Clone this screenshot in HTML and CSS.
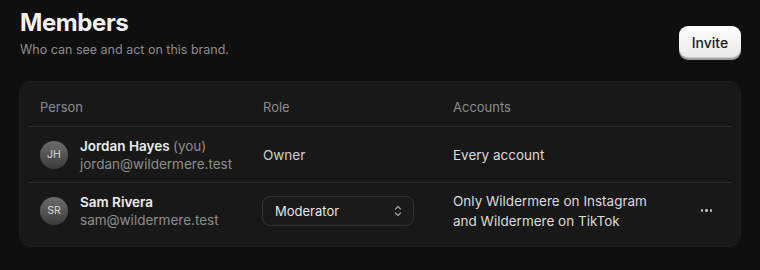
FILE: index.html
```html
<!DOCTYPE html>
<html>
<head>
<meta charset="utf-8">
<link rel="stylesheet" href="styles.css">
</head>
<body>
<div class="page">
  <header class="head">
    <div class="head-text">
      <h1 class="title">Members</h1>
      <p class="subtitle">Who can see and act on this brand.</p>
    </div>
    <button class="invite">Invite</button>
  </header>
  <section class="card">
    <div class="row row-head">
      <div class="cell">Person</div>
      <div class="cell">Role</div>
      <div class="cell">Accounts</div>
      <div class="cell"></div>
    </div>
    <div class="row">
      <div class="cell person">
        <div class="avatar">JH</div>
        <div class="who">
          <div class="name">Jordan Hayes <span class="you">(you)</span></div>
          <div class="email">jordan@wildermere.test</div>
        </div>
      </div>
      <div class="cell role">Owner</div>
      <div class="cell accounts">Every account</div>
      <div class="cell"></div>
    </div>
    <div class="row">
      <div class="cell person">
        <div class="avatar">SR</div>
        <div class="who">
          <div class="name">Sam Rivera</div>
          <div class="email">sam@wildermere.test</div>
        </div>
      </div>
      <div class="cell role">
        <div class="select">
          <span>Moderator</span>
          <svg class="chev" width="10" height="14" viewBox="0 0 10 14" fill="none" stroke="#9a9a9a" stroke-width="1.3" stroke-linecap="round" stroke-linejoin="round"><path d="M2.5 5 L5 2.5 L7.5 5"/><path d="M2.5 9 L5 11.5 L7.5 9"/></svg>
        </div>
      </div>
      <div class="cell accounts">Only Wildermere on Instagram<br>and Wildermere on TikTok</div>
      <div class="cell actions"><span class="dots"><i></i><i></i><i></i></span></div>
    </div>
  </section>
</div>
</body>
</html>
```
FILE: styles.css
```css
* { box-sizing: border-box; }
html, body { margin: 0; padding: 0; background: #0f0f10; }
body {
  font-family: Inter, "Noto Sans", sans-serif;
  color: #ececec;
  width: 760px;
  height: 270px;
  overflow: hidden;
}
.page { padding: 8px 19px 0 19px; }
.head {
  display: flex;
  justify-content: space-between;
  align-items: flex-start;
  padding-left: 1px;
}
.title {
  margin: 0;
  font-size: 24px;
  line-height: 30px;
  font-weight: 700;
  letter-spacing: -0.4px;
  color: #f2f2f2;
}
.subtitle {
  margin: 3px 0 0 0;
  font-size: 12.5px;
  line-height: 18px;
  color: #8d8d8d;
}
.invite {
  margin-top: 18px;
  width: 62px;
  height: 32px;
  border: none;
  border-radius: 9px;
  background: linear-gradient(#ffffff, #e9e9e9);
  box-shadow: 0 2px 0 #9a9a9a, inset 0 -1px 0 #d0d0d0;
  font-family: Inter, sans-serif;
  font-size: 14px;
  font-weight: 500;
  color: #1a1a1a;
  padding: 0;
}
.card {
  margin-top: 22px;
  width: 722px;
  background: #181818;
  border: 1px solid #1f1f1f;
  border-radius: 12px;
  padding: 0 8px 8px 8px;
}
.row {
  display: grid;
  grid-template-columns: 223px 190px 1fr 51px;
  align-items: center;
  height: 56px;
}
.row + .row { border-top: 1px solid #2c2c2c; }
.cell { padding: 0 12px; }
.row-head { height: 44px; padding-top: 6px; font-size: 13px; color: #8d8d8d; }
.person { display: flex; align-items: center; gap: 12px; }
.avatar {
  width: 28px;
  height: 28px;
  border-radius: 50%;
  background: linear-gradient(#6c6c6c, #3b3b3b);
  color: #d8d8d8;
  font-size: 10.5px;
  display: flex;
  align-items: center;
  justify-content: center;
  flex: none;
}
.name { font-size: 13.5px; line-height: 18px; font-weight: 600; color: #ededed; }
.you { font-weight: 400; color: #8d8d8d; }
.email { font-size: 13.5px; line-height: 18px; color: #8d8d8d; }
.role { font-size: 13.5px; color: #cfcfcf; }
.accounts { font-size: 13.5px; line-height: 20px; color: #dadada; }
.select {
  width: 152px;
  height: 30px;
  margin-left: -1px;
  border: 1px solid #333;
  border-radius: 8px;
  background: #1a1a1a;
  display: flex;
  align-items: center;
  justify-content: space-between;
  padding: 0 10px 0 12px;
  font-size: 13px;
  color: #e6e6e6;
}
.chev { display: block; }
.actions { display: flex; justify-content: flex-end; padding-right: 20px; }
.dots { display: flex; gap: 2px; }
.dots i { width: 2.5px; height: 2.5px; border-radius: 50%; background: #bdbdbd; display: block; }
```
